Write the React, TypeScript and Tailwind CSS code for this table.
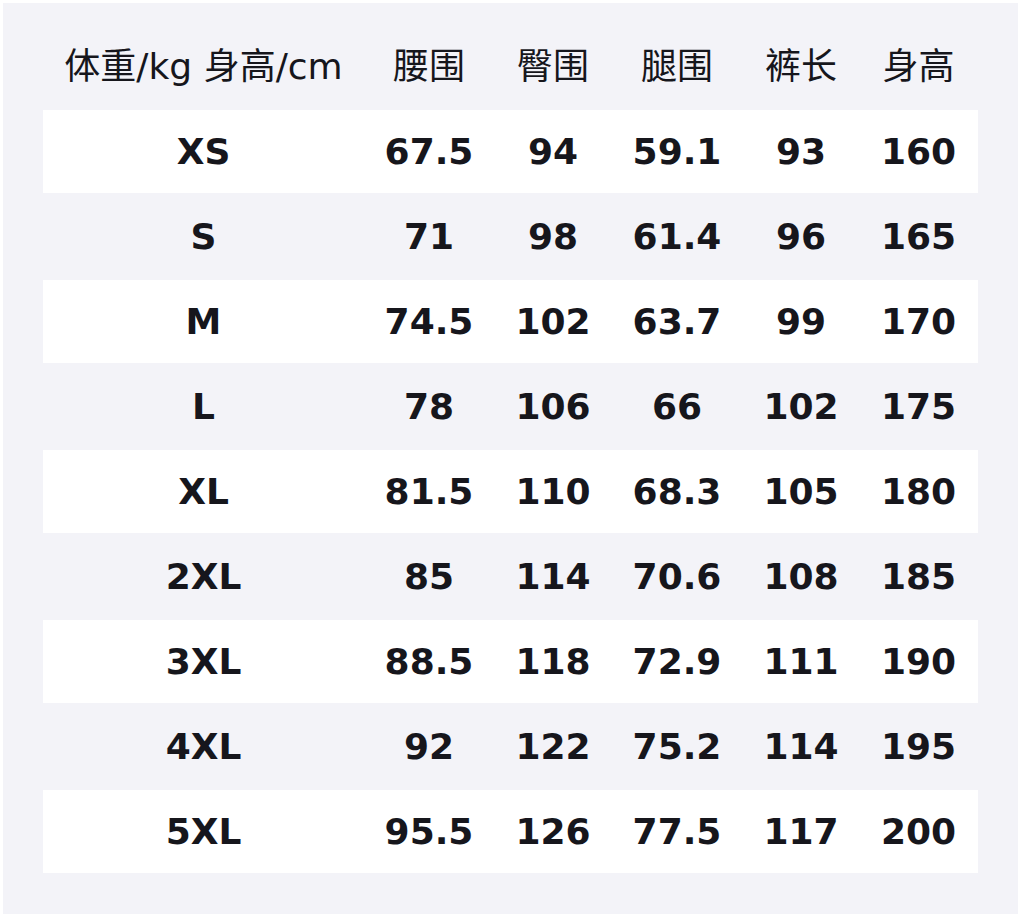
const HEADERS = ["体重/kg 身高/cm", "腰围", "臀围", "腿围", "裤长", "身高"];

const ROWS: string[][] = [
  ["XS", "67.5", "94", "59.1", "93", "160"],
  ["S", "71", "98", "61.4", "96", "165"],
  ["M", "74.5", "102", "63.7", "99", "170"],
  ["L", "78", "106", "66", "102", "175"],
  ["XL", "81.5", "110", "68.3", "105", "180"],
  ["2XL", "85", "114", "70.6", "108", "185"],
  ["3XL", "88.5", "118", "72.9", "111", "190"],
  ["4XL", "92", "122", "75.2", "114", "195"],
  ["5XL", "95.5", "126", "77.5", "117", "200"],
];

const FONT = { fontFamily: '"DejaVu Sans", "Noto Sans CJK SC", sans-serif' };

export default function App() {
  return (
    <div className="w-[1021px] h-[918px] bg-white p-[3px]" style={FONT}>
      <div className="w-[1015px] h-[911px] bg-[#f3f3f8] pt-[20px] px-[40px] text-[#16161c]">
        {/* header */}
        <div className="grid grid-cols-[321px_130px_118px_130px_118px_117px] h-[87px] items-center text-[36px] font-normal">
          {HEADERS.map((h) => (
            <div key={h} className="text-center whitespace-nowrap leading-none">
              {h}
            </div>
          ))}
        </div>

        {/* rows */}
        {ROWS.map((row, i) => (
          <div
            key={row[0]}
            className={
              i % 2 === 0
                ? "grid grid-cols-[321px_130px_118px_130px_118px_117px] h-[83px] items-center bg-white text-[36px] font-bold"
                : "grid grid-cols-[321px_130px_118px_130px_118px_117px] h-[87px] items-center text-[36px] font-bold"
            }
          >
            {row.map((cell, j) => (
              <div key={j} className="text-center whitespace-nowrap leading-none">
                {cell}
              </div>
            ))}
          </div>
        ))}
      </div>
    </div>
  );
}
